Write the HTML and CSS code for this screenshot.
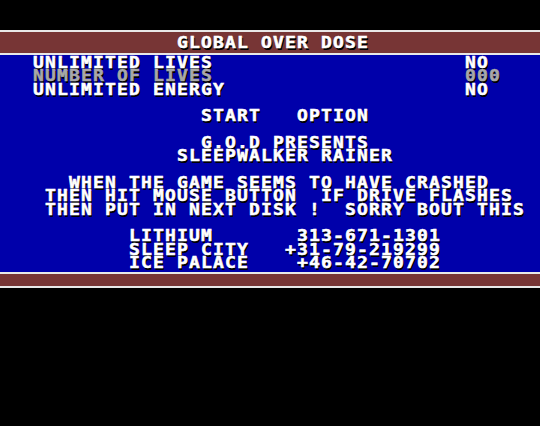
FILE: index.html
```html
<!DOCTYPE html>
<html lang="en">
<head>
  <meta charset="UTF-8" />
  <meta name="viewport" content="width=device-width, initial-scale=1.0"/>
  <title>Global Over Dose</title>
  <link rel="stylesheet" href="styles.css">
</head>
<body>
  <div class="screen">
    <header class="bar bar-title">
<pre class="text">              GLOBAL OVER DOSE</pre>
    </header>

    <main class="panel">
<pre class="text">  UNLIMITED LIVES                     NO
<span class="dim">  NUMBER OF LIVES                     000</span>
  UNLIMITED ENERGY                    NO

                START   OPTION

                G.O.D PRESENTS
              SLEEPWALKER RAINER

     WHEN THE GAME SEEMS TO HAVE CRASHED
   THEN HIT MOUSE BUTTON  IF DRIVE FLASHES
   THEN PUT IN NEXT DISK !  SORRY BOUT THIS

          LITHIUM       313-671-1301
          SLEEP CITY   +31-79-219299
          ICE PALACE    +46-42-70702</pre>
    </main>

    <footer class="bar bar-foot"></footer>
  </div>
</body>
</html>
```

FILE: styles.css
```css
body {
  margin: 0;
  background: #000;
  width: 540px;
  height: 426px;
  overflow: hidden;
}
.screen {
  padding-top: 30px;
}
.bar {
  background: #773535;
  border-top: 2px solid #e8e8e8;
  border-bottom: 2px solid #e8e8e8;
}
.bar-title {
  height: 21px;
  overflow: hidden;
}
.bar-title .text {
  margin-top: 5px;
}
.bar-foot {
  height: 12px;
}
.panel {
  display: block;
  background: #0000aa;
  height: 215px;
  padding-top: 2px;
  overflow: hidden;
}
/* 12px character cell: 10px advance stretched 1.2x */
.text {
  margin: 0 0 0 9px;
  font-family: "DejaVu Sans Mono", "Liberation Mono", monospace;
  font-weight: bold;
  font-size: 15px;
  letter-spacing: 0.97px;
  line-height: 13.333px;
  color: #fff;
  -webkit-text-stroke: 0.5px currentColor;
  text-shadow: 1px 1.5px 0 #000;
  transform: scaleX(1.2);
  transform-origin: 0 0;
}
.dim {
  color: #a8a8a8;
}
```
